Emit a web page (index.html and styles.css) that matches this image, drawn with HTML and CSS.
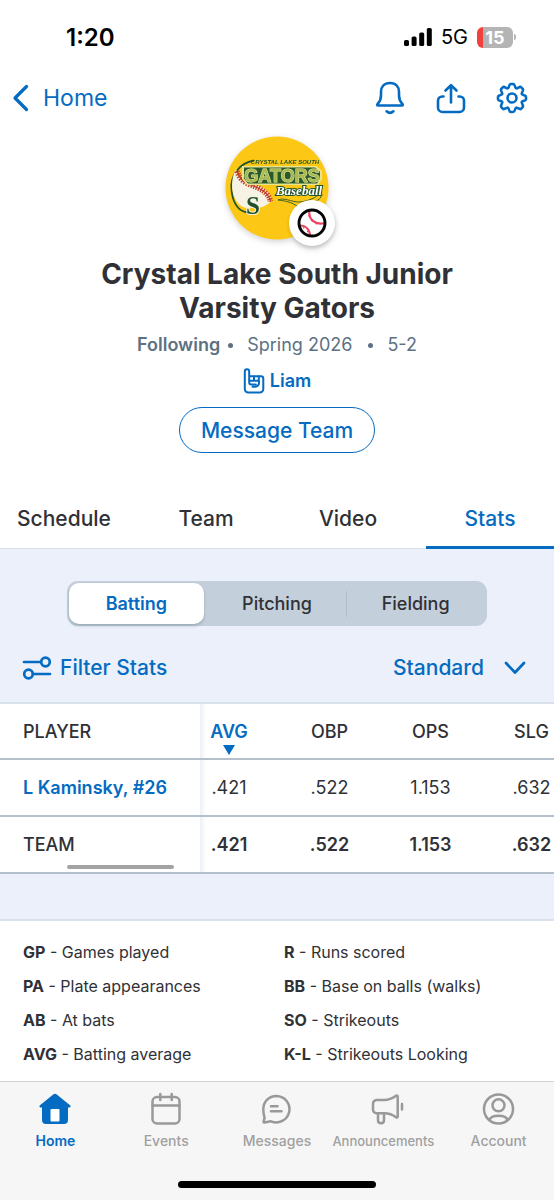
FILE: index.html
```html
<!DOCTYPE html>
<html lang="en">
<head>
<meta charset="utf-8">
<meta name="viewport" content="width=device-width, initial-scale=1">
<title>Crystal Lake South Junior Varsity Gators</title>
<link rel="stylesheet" href="styles.css">
</head>
<body>
<div class="app">
  <div class="status">
    <span class="status-time">1:20</span>
    <div class="status-right">
      <svg class="signal" width="28" height="18" viewBox="0 0 28 18" aria-hidden="true"><rect x="0" y="12" width="5" height="6" rx="1.6"/><rect x="7.6" y="8.500" width="5" height="9.500" rx="1.600"/><rect x="15.200" y="4.500" width="5" height="13.500" rx="1.600"/><rect x="22.800" y="0" width="5" height="18" rx="1.600"/></svg>
      <span class="status-net">5G</span>
      <span class="battery"><span class="battery-body">15</span><span class="battery-tip"></span></span>
    </div>
  </div>

  <header class="topbar">
    <a class="back" href="#home">
      <svg width="18" height="30" viewBox="0 0 18 30" fill="none" stroke="currentColor" stroke-width="3.200" stroke-linecap="round" stroke-linejoin="round" aria-hidden="true"><path d="M15.500 3.500 4 15l11.500 11.500"/></svg>
      Home
    </a>
    <div class="actions">
      <button class="icon-btn" type="button" aria-label="Notifications">
        <svg width="34" height="34" viewBox="0 0 34 34" fill="none" stroke="currentColor" stroke-width="2.600" stroke-linecap="round" stroke-linejoin="round"><path d="M17 2C11 2 8 6.200 8 11v3.600c0 4-1.400 6.400-3.500 8.600-.5.600-.3 1.300.5 1.300h24c.8 0 1-.7.500-1.300-2.100-2.200-3.500-4.600-3.500-8.600V11c0-4.800-3-9-9-9z"/><path d="M13.600 30.300c2 1.800 4.800 1.800 6.800 0"/></svg>
      </button>
      <button class="icon-btn" type="button" aria-label="Share">
        <svg width="34" height="34" viewBox="0 0 34 34" fill="none" stroke="currentColor" stroke-width="2.600" stroke-linecap="round" stroke-linejoin="round"><path d="M17 21.500V4.500M11.500 9.500 17 4.200l5.500 5.300"/><path d="M9.500 15.500H8.300a4.300 4.300 0 0 0-4.300 4.300v6.700A4.500 4.500 0 0 0 8.500 31h17a4.500 4.500 0 0 0 4.500-4.500v-6.700a4.300 4.300 0 0 0-4.300-4.300h-1.200"/></svg>
      </button>
      <button class="icon-btn" type="button" aria-label="Settings">
        <svg width="34" height="34" viewBox="-17 -17 34 34" fill="none" stroke="currentColor" stroke-width="2.600" stroke-linecap="round" stroke-linejoin="round"><defs><path id="tooth" d="M-4.100-9.900C-2.500-10.500-3.200-14-1.300-14H1.300C3.200-14 2.500-10.500 4.100-9.900"/></defs><use href="#tooth"/><use href="#tooth" transform="rotate(45)"/><use href="#tooth" transform="rotate(90)"/><use href="#tooth" transform="rotate(135)"/><use href="#tooth" transform="rotate(180)"/><use href="#tooth" transform="rotate(225)"/><use href="#tooth" transform="rotate(270)"/><use href="#tooth" transform="rotate(315)"/><circle r="4.500"/></svg>
      </button>
    </div>
  </header>

  <section class="team">
    <div class="crest">
      <svg class="crest-logo" width="104" height="104" viewBox="0 0 104 104" role="img" aria-label="Gators Baseball logo">
        <circle cx="52" cy="52" r="51.500" fill="#fcc815"/>
        <path d="M29 24.500C14 27 5 40 6.500 54 8 68 14 75 22 76.500" fill="none" stroke="#23552b" stroke-width="1.800"/>
        <path d="M11 33C5 44 6 59 13 67c4 5 9 6 15 4 7 2 14-1 18-6 0-9-6-14-19-17-9-3-14-7-16-15z" fill="#f7f3e4"/>
        <path d="M12 35c3 9 8 12 15 14.500 9 3 17 8 18.500 16" fill="none" stroke="#c7432a" stroke-width="5.500" stroke-dasharray="1.400 1.200"/>
        <path d="M12 35c3 9 8 12 15 14.500 9 3 17 8 18.500 16" fill="none" stroke="#b63826" stroke-width="1.300"/>
        <path d="M17 30h74l6 5v8l-4 6H22l-5-6z" fill="#e9e48e"/>
        <path d="M19 31.500h71l5 4v7l-3 5H23l-4-5z" fill="#2a5a2c"/>
        <path d="M53 64c6-3 13 2 21 2 10-.5 17-5 21.500-8.500 3 5-5 9-14 9.500-6 .5-8 3-6.500 6-5-6-13-8-22-9z" fill="#fcc815" stroke="#3f6526" stroke-width="1"/>
        <text class="crest-top" x="60" y="28" text-anchor="middle">CRYSTAL LAKE SOUTH</text>
        <text class="crest-name" x="57" y="46" text-anchor="middle">GATORS</text>
        <text class="crest-script" x="74" y="59" text-anchor="middle">Baseball</text>
        <text class="crest-letter" x="28" y="78" text-anchor="middle">S</text>
      </svg>
      <span class="badge">
        <svg width="30" height="30" viewBox="0 0 30 30" fill="none" aria-hidden="true"><path d="M12.500 2.500c-1.500 8.500 5.500 15 15 12.500M2.500 17.500c6-.5 10.500 4 10.500 10.500" stroke="#ee4460" stroke-width="2.100"/><path d="m11 8 2.500-.8M14 13l1.800-1.700M19 16.500l.8-2.400M6 20.500l1.300-1.800M10 24l2-1.200" stroke="#ee4460" stroke-width="1.100"/><circle cx="15" cy="15" r="13" stroke="#050505" stroke-width="2.900"/></svg>
      </span>
    </div>
    <h1 class="team-name">Crystal Lake South Junior Varsity Gators</h1>
    <p class="meta"><strong class="meta-follow">Following</strong><span class="dot"></span><span class="season">Spring 2026</span><span class="dot"></span><span class="record">5-2</span></p>
    <a class="fan" href="#liam">
      <svg width="22" height="26" viewBox="0 0 22 26" fill="none" stroke="currentColor" stroke-width="2" stroke-linecap="round" stroke-linejoin="round" aria-hidden="true"><path d="M6.200 12V3.500a2.200 2.200 0 0 0-4.400 0V21a3.500 3.500 0 0 0 3.500 3.500h11.500a3.500 3.500 0 0 0 3.500-3.500V10.500a2.300 2.300 0 0 0-2.300-2.300H6.200"/><path d="M6.200 12.800h9.600V8.500M11 8.500v4.300M6.200 13v1.500a2 2 0 0 0 2 2h4.600M15.800 12.800c.8 3-.5 5.700-3.300 5.900H9.500"/></svg>
      Liam
    </a>
    <button class="message" type="button">Message Team</button>
  </section>

  <nav class="tabs" aria-label="Team sections">
    <a class="tab" href="#schedule">Schedule</a>
    <a class="tab" href="#team">Team</a>
    <a class="tab" href="#video">Video</a>
    <a class="tab tab-active" href="#stats" aria-current="page">Stats</a>
  </nav>

  <main class="stats">
    <div class="controls">
      <div class="segments" role="group" aria-label="Stat type">
        <button class="segment segment-active" type="button" aria-pressed="true">Batting</button>
        <button class="segment" type="button" aria-pressed="false">Pitching</button>
        <button class="segment segment-divided" type="button" aria-pressed="false">Fielding</button>
      </div>
      <div class="filters">
        <button class="filter" type="button">
          <svg width="30" height="26" viewBox="0 0 30 26" fill="none" stroke="currentColor" stroke-width="2.700" stroke-linecap="round" aria-hidden="true"><path d="M2 7h16.500M11 19h17"/><circle cx="23.500" cy="7" r="4.300"/><circle cx="6.500" cy="19" r="4.300"/></svg>
          Filter Stats
        </button>
        <label class="view">
          <select class="view-select" aria-label="Stat view"><option>Standard</option><option>Advanced</option></select>
          <svg width="22" height="14" viewBox="0 0 22 14" fill="none" stroke="currentColor" stroke-width="2.700" stroke-linecap="round" stroke-linejoin="round" aria-hidden="true"><path d="m2 2 9 9.500L20 2"/></svg>
        </label>
      </div>
    </div>

    <div class="table-wrap">
      <div class="table-scroll">
        <table class="table">
          <colgroup><col class="col-player"><col class="col-first"><col class="col-stat"><col class="col-stat"><col class="col-stat"></colgroup>
          <thead>
            <tr><th class="player" scope="col">PLAYER</th><th class="first sorted" scope="col" aria-sort="descending">AVG<span class="sort-mark"></span></th><th scope="col">OBP</th><th scope="col">OPS</th><th scope="col">SLG</th></tr>
          </thead>
          <tbody>
            <tr><th class="player" scope="row"><a class="player-link" href="#player-26">L Kaminsky, #26</a></th><td class="first">.421</td><td>.522</td><td>1.153</td><td>.632</td></tr>
            <tr class="total"><th class="player" scope="row">TEAM</th><td class="first">.421</td><td>.522</td><td>1.153</td><td>.632</td></tr>
          </tbody>
        </table>
      </div>
      <span class="scroll-thumb"></span>
    </div>

    <div class="legend">
      <ul class="legend-col">
        <li><b>GP</b> - Games played</li>
        <li><b>PA</b> - Plate appearances</li>
        <li><b>AB</b> - At bats</li>
        <li><b>AVG</b> - Batting average</li>
      </ul>
      <ul class="legend-col">
        <li><b>R</b> - Runs scored</li>
        <li><b>BB</b> - Base on balls (walks)</li>
        <li><b>SO</b> - Strikeouts</li>
        <li><b>K-L</b> - Strikeouts Looking</li>
      </ul>
    </div>
  </main>

  <footer class="dock">
    <nav class="dock-nav" aria-label="Main">
      <a class="dock-item dock-active" href="#home">
        <svg width="34" height="34" viewBox="0 0 34 34" aria-hidden="true"><path fill="currentColor" d="M15.200 2.500a2.700 2.700 0 0 1 3.600 0L32 13.200c1.200 1 .5 2.300-.7 2.300H30V28a4 4 0 0 1-4 4H8a4 4 0 0 1-4-4V15.500H2.700c-1.200 0-1.900-1.300-.7-2.300z"/><rect x="12.500" y="17" width="9" height="12.500" rx="1" fill="#fff"/></svg>
        <span>Home</span>
      </a>
      <a class="dock-item" href="#events">
        <svg width="34" height="34" viewBox="0 0 34 34" fill="none" stroke="#999" stroke-width="2.500" stroke-linecap="round" aria-hidden="true"><rect x="3.500" y="5" width="27" height="26.500" rx="4.500"/><path d="M3.500 13.500h27M11.300 2v6M22.700 2v6"/></svg>
        <span>Events</span>
      </a>
      <a class="dock-item" href="#messages">
        <svg width="34" height="34" viewBox="0 0 34 34" fill="none" stroke="#999" stroke-width="2.500" stroke-linecap="round" stroke-linejoin="round" aria-hidden="true"><path d="M16.500 4a13.200 13.200 0 1 1-5.500 25.300L4.500 30.500c-.9.100-1.300-.5-.9-1.200l1-3.500c-.8-2.600-1.300-5.300-1.300-8.300C3.300 10 8.500 4 16.500 4z"/><path d="M11 14.300h6.500M11 19.300h10.500"/></svg>
        <span>Messages</span>
      </a>
      <a class="dock-item" href="#announcements">
        <svg width="34" height="34" viewBox="0 0 34 34" fill="none" stroke="#999" stroke-width="2.500" stroke-linecap="round" stroke-linejoin="round" aria-hidden="true"><path d="M5.500 8H13c5 0 8.500-1.500 12-4.200.9-.6 1.700-.2 1.700.8v19.800c0 1-.8 1.400-1.700.8-3.500-2.700-6.500-4-11.500-4H5.500A3.500 3.500 0 0 1 2 17.700v-6A3.700 3.700 0 0 1 5.500 8z"/><path d="M7 21.500v6.800c0 4 6 4 6 0v-6.800M31 12v5.500"/></svg>
        <span class="dock-long">Announcements</span>
      </a>
      <a class="dock-item" href="#account">
        <svg width="34" height="34" viewBox="0 0 34 34" fill="none" stroke="#999" stroke-width="2.500" stroke-linecap="round" aria-hidden="true"><circle cx="16.500" cy="17" r="14.500"/><circle cx="16.500" cy="13.300" r="6"/><path d="M7.500 28c1-3 4-4.200 9-4.200s8 1.200 9 4.200"/></svg>
        <span>Account</span>
      </a>
    </nav>
    <div class="home-bar"></div>
  </footer>
</div>
</body>
</html>
```
FILE: styles.css
```css
:root {
  --blue: #046bc2;
  --ink: #303136;
  --panel: #ebf0fa;
  --rule: #d9e1ea;
}

* { box-sizing: border-box; }

body {
  margin: 0;
  background: #fff;
  color: var(--ink);
  font-family: Inter, "Liberation Sans", sans-serif;
  font-size: 16px;
}

a { color: inherit; text-decoration: none; }
button, select { font: inherit; color: inherit; background: none; border: 0; padding: 0; }
svg { display: block; flex: none; }
ul { list-style: none; margin: 0; padding: 0; }

.app { display: flex; flex-direction: column; min-height: 100vh; }

/* Status bar */
.status { display: flex; justify-content: space-between; align-items: center; height: 74px; padding: 0 38px 0 66px; color: #000; }
.status-time { font-size: 24px; font-weight: 600; }
.status-right { display: flex; align-items: center; gap: 9px; }
.status-net { font-size: 20px; }
.battery { display: flex; align-items: center; gap: 1px; }
.battery-body { width: 36px; border-radius: 6px; background: linear-gradient(90deg, #f0413c 6px, #b4b4b4 6px); color: #fff; font-size: 18px; font-weight: 700; line-height: 21px; text-align: center; }
.battery-tip { width: 2px; height: 6px; border-radius: 0 2px 2px 0; background: #b4b4b4; }

/* Top bar */
.topbar { display: flex; justify-content: space-between; align-items: center; height: 48px; padding: 0 25px 0 11px; color: var(--blue); }
.back { display: flex; align-items: center; gap: 14px; font-size: 23px; }
.actions { display: flex; gap: 27px; }
.icon-btn { display: flex; }

/* Team header */
.team { display: flex; flex-direction: column; align-items: center; padding: 14px 24px 0; }
.crest { position: relative; display: flex; filter: drop-shadow(0 2px 3px rgba(0, 0, 0, .18)); }
.badge { position: absolute; right: -6px; bottom: -6px; display: grid; place-items: center; width: 46px; height: 46px; border-radius: 50%; background: #fff; box-shadow: 0 2px 4px rgba(0, 0, 0, .15); }
.crest-top { font: italic 700 6px "Liberation Sans", sans-serif; fill: #23552b; }
.crest-name { font: 700 18px "Liberation Sans", sans-serif; fill: #a9bb4e; stroke: #f3eeb0; stroke-width: 1; paint-order: stroke; }
.crest-script { font: italic 700 13px "Liberation Serif", serif; fill: #fff; stroke: #23552b; stroke-width: 2; paint-order: stroke; }
.crest-letter { font: 700 25px "Liberation Serif", serif; fill: #1f5130; stroke: #f7f3e4; stroke-width: 2; paint-order: stroke; }
.team-name { max-width: 380px; margin: 17px 0 0; font-size: 28px; font-weight: 700; line-height: 34px; text-align: center; }
.meta { display: flex; align-items: center; margin: 8px 0 0; font-size: 18px; line-height: 24px; color: #5d7182; }
.meta-follow { font-weight: 600; }
.dot { width: 5px; height: 5px; margin: 0 14px 0 8px; border-radius: 50%; background: currentColor; }
.season + .dot { margin: 0 14px 0 16px; }
.fan { display: flex; align-items: center; gap: 5px; margin-top: 11px; color: var(--blue); font-size: 18px; font-weight: 600; line-height: 26px; }
.message { height: 46px; margin-top: 13px; padding: 0 21px; border: 1px solid var(--blue); border-radius: 23px; color: var(--blue); font-size: 21px; font-weight: 500; }

/* Section tabs */
.tabs { display: grid; grid-template-columns: repeat(4, 1fr); column-gap: 14px; margin-top: 35px; border-bottom: 1px solid var(--rule); }
.tab { height: 61px; margin-bottom: -1px; text-align: center; font-size: 21px; font-weight: 500; line-height: 62px; }
.tab-active { border-bottom: 3px solid var(--blue); color: var(--blue); }

/* Controls */
.stats { flex: 1; display: flex; flex-direction: column; background: var(--panel); }
.controls { padding: 32px 28px 18px 22px; }
.segments { display: grid; grid-template-columns: repeat(3, 1fr); margin: 0 39px 0 45px; padding: 2px; border-radius: 11px; background: #c3cfdb; }
.segment { height: 41px; font-size: 18px; font-weight: 500; }
.segment-active { margin-right: 4px; border-radius: 10px; background: #fff; color: var(--blue); font-weight: 600; box-shadow: 0 2px 3px rgba(70, 85, 105, .3); }
.segment-divided { background: linear-gradient(#afbcc9, #afbcc9) left center / 1px 26px no-repeat; }
.filters { display: flex; justify-content: space-between; align-items: center; margin-top: 26px; color: var(--blue); font-size: 21px; font-weight: 500; line-height: 32px; }
.filter { display: flex; align-items: center; gap: 8px; }
.view { display: flex; align-items: center; gap: 20px; }
.view-select { appearance: none; field-sizing: content; }

/* Stats table */
.table-wrap { position: relative; border-top: 2px solid var(--rule); background: #fff; }
.table-scroll { overflow: hidden; }
.table { table-layout: fixed; width: 582px; border-collapse: separate; border-spacing: 0; font-size: 18px; }
.col-player { width: 200px; }
.col-first { width: 79px; }
.col-stat { width: 101px; }
.table th, .table td { height: 57px; padding: 0; border-bottom: 2px solid #b3bfcb; text-align: center; font-weight: 400; }
.table thead th { height: 56px; font-weight: 500; }
.table .first { padding-right: 21px; background: linear-gradient(90deg, #eaf0f6, #fff 6px); }
.table .player { padding-left: 23px; text-align: left; font-weight: 500; }
.table .sorted { position: relative; color: var(--blue); font-weight: 600; }
.sort-mark { position: absolute; left: 23px; bottom: 3px; border: solid transparent; border-width: 10px 6px 0; border-top-color: var(--blue); }
.table .player-link { color: var(--blue); font-weight: 600; }
.table .total td { font-weight: 600; }
.scroll-thumb { position: absolute; left: 67px; bottom: 5px; width: 107px; height: 4px; border-radius: 2px; background: #a3a3a3; }

/* Legend */
.legend { flex: 1; display: grid; grid-template-columns: repeat(2, 1fr); column-gap: 14px; margin-top: 45px; padding: 14px 23px 10px; border-top: 2px solid var(--rule); background: #fff; font-size: 16px; line-height: 34px; }

/* Bottom dock */
.dock { position: sticky; bottom: 0; padding: 10px 0 12px; border-top: 1px solid #d4d4d6; background: #f6f6f7; }
.dock-nav { display: grid; grid-template-columns: repeat(5, minmax(0, 1fr)); }
.dock-item { display: flex; flex-direction: column; align-items: center; gap: 6px; color: #a0a0a0; font-size: 14px; font-weight: 500; line-height: 18px; }
.dock-long { align-self: flex-start; font-size: 13px; }
.dock-active { color: var(--blue); font-weight: 600; }
.home-bar { width: 198px; height: 7px; margin: 31px auto 0; border-radius: 4px; background: #000; }
```
